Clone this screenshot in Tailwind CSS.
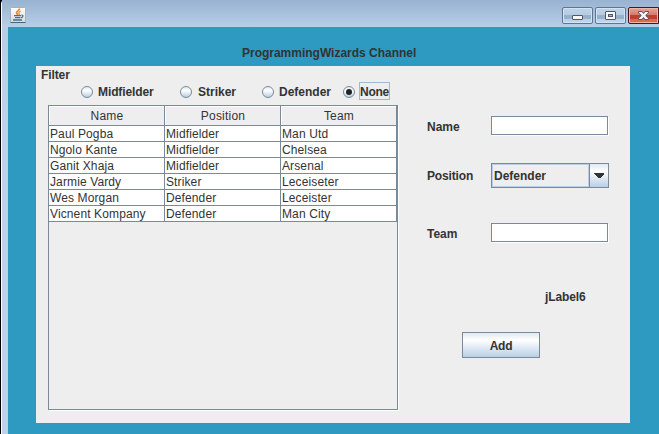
<!DOCTYPE html>
<html lang="en">
<head>
<meta charset="utf-8">
<title>ProgrammingWizards Channel</title>
<script src="https://cdn.jsdelivr.net/npm/@tailwindcss/browser@4"></script>
</head>
<body class="h-[434px] w-[659px] overflow-hidden bg-black font-['Liberation_Sans',Arial,sans-serif] text-[12px] leading-[16px] text-[#333333]">
<div class="ml-px flex h-[434px] w-[658px] flex-col rounded-tl-[4px] border-l border-white bg-linear-to-b from-[#98b3d1] from-0% via-[#b5cde6] via-[27px] to-[#bdd3ec] to-[120px]">
  <header class="flex h-[27px] shrink-0 items-start bg-linear-to-b from-[#98b3d1] to-[#b7cfe8] pl-2">
    <svg class="mt-[7px] size-4" viewBox="0 0 16 16" fill="none">
      <defs><linearGradient id="j" x2="0" y2="1"><stop stop-color="#fff"/><stop offset="1" stop-color="#d5d9dc"/></linearGradient></defs>
      <rect x=".5" y=".5" width="15" height="15" rx="1" fill="url(#j)" stroke="#a5b1bb"/>
      <path d="M.5 15.500h15" stroke="#4c6478"/>
      <path d="M9.500 1.500C9.500 3.800 5.800 4 6.600 6.200L8 8" stroke="#e8801f" stroke-width="1.6"/>
      <path d="M10.600 4C8.600 5 8.600 6 9.500 7.700" stroke="#e8801f" stroke-width="1.200"/>
      <path d="M4 8.700h7M5 10.700h5.500M3 13h9M11.500 8.200c2.200-.3 1.600 2-.4 2.700" stroke="#44708e" stroke-width="1.300"/>
    </svg>
    <div class="mt-[7px] ml-auto flex h-[17px] gap-[2px]">
      <div class="flex w-[31px] justify-center rounded-[2px] border border-[#5f7590] bg-linear-to-b from-[#c0d4e8] from-0% via-[#b6cce2] via-45% to-[#bed6ed] shadow-[inset_0_0_0_1px_#d4e3f2]">
        <svg class="h-[15px] w-[29px]" viewBox="0 0 29 15"><path d="M1 7h27v4H1z" fill="#95b1cd"/><rect x="9.5" y="7.5" width="10" height="4" rx=".5" fill="#f8f8f5" stroke="#535666"/></svg>
      </div>
      <div class="flex w-[31px] justify-center rounded-[2px] border border-[#5f7590] bg-linear-to-b from-[#c0d4e8] from-0% via-[#b6cce2] via-45% to-[#bed6ed] shadow-[inset_0_0_0_1px_#d4e3f2]">
        <svg class="h-[15px] w-[29px]" viewBox="0 0 29 15"><path d="M1 7h27v4H1z" fill="#95b1cd"/><rect x="9.5" y="3.5" width="10" height="8" rx=".5" fill="#f8f8f5" stroke="#535666"/><rect x="12.5" y="6.500" width="4" height="2" fill="#9bb7d5" stroke="#535666"/></svg>
      </div>
      <div class="w-[31px] rounded-l-[2px] border border-[#4a1522] bg-linear-to-b from-[#e3a598] from-0% via-[#d77a6c] via-45% to-[#df8d6c] shadow-[inset_0_0_0_1px_#eeb5a9]">
        <svg class="h-[15px] w-[29px]" viewBox="0 0 29 15"><path d="M1 7h27v4H1z" fill="#bd4030"/><path d="M1 11h27v3H1z" fill="#d76d4e"/><path d="M9.500 3.500h3.500l1.500 2 1.500-2h3.500v1.300L16.700 7.500l2.800 2.700v1.300H16l-1.500-2-1.500 2H9.500v-1.300l2.800-2.700-2.800-2.700z" fill="#f4f4f4" stroke="#535666"/></svg>
      </div>
    </div>
  </header>
  <main class="ml-[6px] flex grow flex-col bg-[#2e9ac2] pl-[28px]">
    <h1 class="mt-[18px] ml-[206px] h-[21px] text-[12px] font-bold tracking-[-0.01px]">ProgrammingWizards Channel</h1>
    <section class="flex h-[357px] w-[594px] bg-[#eeeeee]">
      <div class="w-[391px] pl-[12px]">
        <div class="-ml-[7px] h-[16px] pt-px font-bold tracking-[-0.1px]">Filter</div>
        <div class="ml-[33px] flex h-[19px] items-center font-bold">
          <div class="flex w-[99px] items-center gap-[5px]"><i class="size-[12px] rounded-full border border-[#7a8a99] bg-linear-to-b from-[#dfe9f2] via-white via-35% to-[#b8cfe5]"></i><span class="tracking-[-0.1px]">Midfielder</span></div>
          <div class="flex w-[82px] items-center gap-[6px]"><i class="size-[12px] rounded-full border border-[#7a8a99] bg-linear-to-b from-[#dfe9f2] via-white via-35% to-[#b8cfe5]"></i><span>Striker</span></div>
          <div class="flex w-[81px] items-center gap-[5px]"><i class="size-[12px] rounded-full border border-[#7a8a99] bg-linear-to-b from-[#dfe9f2] via-white via-35% to-[#b8cfe5]"></i><span>Defender</span></div>
          <div class="flex items-center gap-[4px]"><i class="flex size-[12px] items-center justify-center rounded-full border border-[#7a8a99] bg-linear-to-b from-[#dfe9f2] via-white via-35% to-[#b8cfe5]"><b class="size-[6px] rounded-full bg-[#222]"></b></i><span class="-mt-px h-[18px] w-[31px] border border-[#a3b8cc] pt-px leading-[16px] tracking-[-0.25px]">None</span></div>
        </div>
        <div class="mt-[4px] h-[305px] w-[350px] border border-[#7a8a99] shadow-[1px_1px_0_white]">
          <table class="w-[348px] table-fixed border-separate border-spacing-0">
            <thead><tr class="h-[20px]">
              <th class="border-r border-b border-[#7a8a99] p-0 pt-[2px] pl-px text-center leading-[17px] font-normal tracking-[0.2px] shadow-[inset_1px_1px_0_white]">Name</th>
              <th class="border-r border-b border-[#7a8a99] p-0 pt-[2px] pl-px text-center leading-[17px] font-normal tracking-[0.2px] shadow-[inset_1px_1px_0_white]">Position</th>
              <th class="border-r border-b border-[#7a8a99] p-0 pt-[2px] pl-px text-center leading-[17px] font-normal tracking-[0.2px] shadow-[inset_1px_1px_0_white]">Team</th>
            </tr></thead>
            <tbody class="bg-white leading-[14px] tracking-[0.12px] *:h-[16px] [&_td]:border-r [&_td]:border-b [&_td]:border-[#7a8a99] [&_td]:p-0 [&_td]:pt-px [&_td]:pl-px">
              <tr><td>Paul Pogba</td><td>Midfielder</td><td>Man Utd</td></tr>
              <tr><td>Ngolo Kante</td><td>Midfielder</td><td>Chelsea</td></tr>
              <tr><td>Ganit Xhaja</td><td>Midfielder</td><td>Arsenal</td></tr>
              <tr><td>Jarmie Vardy</td><td>Striker</td><td>Leceiseter</td></tr>
              <tr><td>Wes Morgan</td><td>Defender</td><td>Leceister</td></tr>
              <tr><td>Vicnent Kompany</td><td>Defender</td><td>Man City</td></tr>
            </tbody>
          </table>
        </div>
      </div>
      <form class="w-[203px] pt-[50px] font-bold">
        <div class="flex h-[47px]"><label class="w-[64px] pt-[3px]">Name</label><div class="h-[19px] w-[117px] border border-[#7a8a99] bg-white shadow-[1px_1px_0_white]"></div></div>
        <div class="flex h-[60px]"><label class="w-[64px] pt-[5px] tracking-[-0.15px]">Position</label>
          <div class="flex h-[25px] w-[118px] border border-[#7a8a99]">
            <div class="w-[97px] border border-[#b8cfe5] pt-[3px] pl-px">Defender</div>
            <div class="flex grow items-center justify-center border-l border-[#7a8a99] bg-linear-to-b from-[#dfe9f2] via-white via-30% to-[#b8cfe5]"><svg class="h-[5px] w-[10px]" viewBox="0 0 10 5" shape-rendering="crispEdges"><path d="M0 0h10v1L6 5H4L0 1z" fill="#333"/></svg></div>
          </div>
        </div>
        <div class="flex h-[66px]"><label class="w-[64px] pt-[3px]">Team</label><div class="h-[19px] w-[117px] border border-[#7a8a99] bg-white shadow-[1px_1px_0_white]"></div></div>
        <div class="h-[43px] pl-[118px] tracking-[-0.1px]">jLabel6</div>
        <button type="button" class="ml-[35px] block h-[26px] w-[78px] border border-[#7a8a99] bg-linear-to-b from-[#dfe9f2] via-white via-30% to-[#b8cfe5] pt-px font-bold tracking-[-0.2px]">Add</button>
      </form>
    </section>
  </main>
</div>
</body>
</html>
